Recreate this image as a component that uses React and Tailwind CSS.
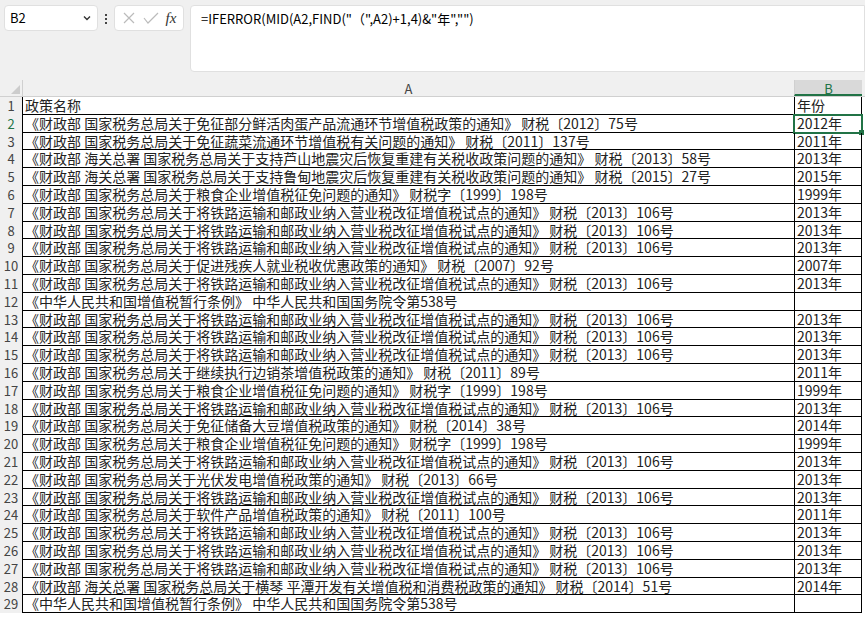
const T1="《财政部 国家税务总局关于将铁路运输和邮政业纳入营业税改征增值税试点的通知》 财税〔2013〕106号";
const T2="《财政部 国家税务总局关于粮食企业增值税征免问题的通知》 财税字〔1999〕198号";
const T3="《中华人民共和国增值税暂行条例》 中华人民共和国国务院令第538号";
const rows=[
["政策名称","年份"],
["《财政部 国家税务总局关于免征部分鲜活肉蛋产品流通环节增值税政策的通知》 财税〔2012〕75号","2012年"],
["《财政部 国家税务总局关于免征蔬菜流通环节增值税有关问题的通知》 财税〔2011〕137号","2011年"],
["《财政部 海关总署 国家税务总局关于支持芦山地震灾后恢复重建有关税收政策问题的通知》 财税〔2013〕58号","2013年"],
["《财政部 海关总署 国家税务总局关于支持鲁甸地震灾后恢复重建有关税收政策问题的通知》 财税〔2015〕27号","2015年"],
[T2,"1999年"],[T1,"2013年"],[T1,"2013年"],[T1,"2013年"],
["《财政部 国家税务总局关于促进残疾人就业税收优惠政策的通知》 财税〔2007〕92号","2007年"],
[T1,"2013年"],[T3,""],[T1,"2013年"],[T1,"2013年"],[T1,"2013年"],
["《财政部 国家税务总局关于继续执行边销茶增值税政策的通知》 财税〔2011〕89号","2011年"],
[T2,"1999年"],[T1,"2013年"],
["《财政部 国家税务总局关于免征储备大豆增值税政策的通知》 财税〔2014〕38号","2014年"],
[T2,"1999年"],[T1,"2013年"],
["《财政部 国家税务总局关于光伏发电增值税政策的通知》 财税〔2013〕66号","2013年"],
[T1,"2013年"],
["《财政部 国家税务总局关于软件产品增值税政策的通知》 财税〔2011〕100号","2011年"],
[T1,"2013年"],[T1,"2013年"],[T1,"2013年"],
["《财政部 海关总署 国家税务总局关于横琴 平潭开发有关增值税和消费税政策的通知》 财税〔2014〕51号","2014年"],
[T3,""],
];
export default function App(){
  const f={fontFamily:'"Noto Sans CJK SC","Liberation Sans",sans-serif'};
  return (
    <div className="w-[865px] h-[618px] overflow-hidden bg-white text-black" style={f}>
      <div className="h-[80px] bg-[#f0f0f0] flex items-start gap-[6px] pt-[5px] pl-[4px]">
        <div className="w-[94px] h-[26px] bg-white rounded border border-[#e0e0e0] flex items-center justify-between px-[5px] text-[13px]">
          <span>B2</span>
          <svg width="10" height="10" viewBox="0 0 10 10"><path d="M2 3.5l3 3 3-3" stroke="#333" strokeWidth="1.4" fill="none"/></svg>
        </div>
        <div className="w-[4px] flex flex-col gap-[2px] pt-[9px] items-center"><i className="w-[2px] h-[2px] bg-[#444]"/><i className="w-[2px] h-[2px] bg-[#444]"/><i className="w-[2px] h-[2px] bg-[#444]"/></div>
        <div className="w-[70px] h-[26px] bg-white rounded border border-[#e0e0e0] flex items-center justify-around px-[3px]">
          <svg width="14" height="14" viewBox="0 0 14 14"><path d="M2 2l10 10M12 2L2 12" stroke="#bbb" strokeWidth="1.2"/></svg>
          <svg width="16" height="14" viewBox="0 0 16 14"><path d="M1 7l4 5L15 2" stroke="#bbb" strokeWidth="1.2" fill="none"/></svg>
          <span className="italic text-[15px] text-[#333]" style={{fontFamily:'"Liberation Serif",serif'}}>fx</span>
        </div>
        <div className="flex-1 h-[67px] bg-white rounded-l border border-[#e0e0e0] pl-[10px] pt-[3px] text-[13px]">=IFERROR(MID(A2,FIND("（",A2)+1,4)&amp;"年","")</div>
      </div>
      <div className="flex h-[17px] bg-[#f0f0f0] text-[13px] text-[#444] border-b border-[#d0d0d0]">
        <div className="w-[22px] relative"><svg className="absolute right-[2px] bottom-[2px]" width="9" height="9"><path d="M9 0V9H0Z" fill="#ccc"/></svg></div>
        <div className="w-[772px] text-center leading-[17px] border-l border-[#d0d0d0]">A</div>
        <div className="w-[68px] text-center leading-[17px] bg-[#d9d9d9] text-[#217346] border-l border-[#d0d0d0] border-b-2 border-b-[#217346]">B</div>
      </div>
      {rows.map((r,i)=>(
        <div key={i} className="flex h-[17.8px] text-[14px] leading-[17px]">
          <div className={"w-[22px] text-center text-[13px] bg-[#f0f0f0] text-[#444] "+(i===1?"bg-[#d9d9d9] text-[#217346]":"")}>{i+1}</div>
          <div className="w-[772px] border-b border-l border-black pl-[2px] whitespace-nowrap overflow-hidden text-[#222]">{r[0]}</div>
          <div className={"w-[68px] border-b border-l border-r border-black pl-[2px] text-[#222] relative "+(i===1?"outline-2 outline-[#217346] -outline-offset-1":"")}>{r[1]}
            {i===1&&<i className="absolute -right-[3px] -bottom-[3px] w-[5px] h-[5px] bg-[#217346]"/>}
          </div>
        </div>
      ))}
    </div>
  );
}
